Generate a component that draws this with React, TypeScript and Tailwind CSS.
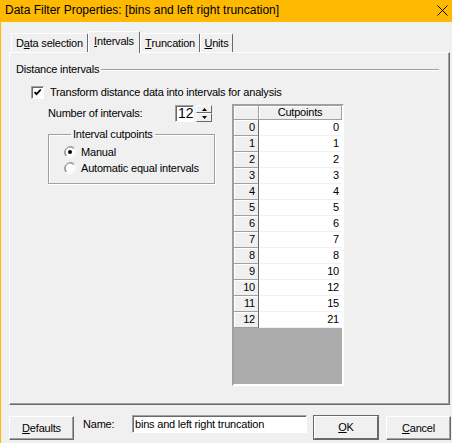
const rows: [number, number][] = [
  [0, 0], [1, 1], [2, 2], [3, 3], [4, 4], [5, 5], [6, 6],
  [7, 7], [8, 8], [9, 10], [10, 12], [11, 15], [12, 21],
]

function Radio({ checked }: { checked?: boolean }) {
  return (
    <svg width="12" height="12" viewBox="0 0 12 12" className="shrink-0">
      <path d="M10.2 1.8A6 6 0 0 0 1.8 10.2" fill="none" stroke="#a0a0a0" strokeWidth="1" />
      <path d="M9.5 2.5A5 5 0 0 0 2.5 9.5" fill="none" stroke="#696969" strokeWidth="1" />
      <path d="M1.8 10.2A6 6 0 0 0 10.2 1.8" fill="none" stroke="#ffffff" strokeWidth="1" />
      <circle cx="6" cy="6" r="4.4" fill="#ffffff" />
      {checked && <circle cx="6" cy="6" r="2" fill="#000000" />}
    </svg>
  )
}

export default function App() {
  return (
    <div className="w-[452px] h-[443px] overflow-hidden bg-[#f0f0f0] text-[11px] leading-[13px] tracking-[-0.2px] text-black font-['Liberation_Sans',Arial,sans-serif]">
      {/* Title bar */}
      <div className="h-[22px] bg-[#ffb900] flex items-center justify-between pl-[5px] pr-[4px] pb-[2px]">
        <span className="text-[12px] leading-[14px] tracking-normal">Data Filter Properties: [bins and left right truncation]</span>
        <svg width="11" height="11" viewBox="0 0 11 11" className="mt-[1px]">
          <path d="M0.5 0.5L10.5 10.5M10.5 0.5L0.5 10.5" stroke="#000" strokeWidth="1" />
        </svg>
      </div>

      <div className="h-[421px] border-l border-l-[#ffb900] pl-[8px] pt-[9px]">
        {/* Tabs */}
        <div className="flex items-end h-[21px]">
          <div className="ml-[2px] w-[77px] h-[19px] flex items-center justify-center border-t border-l border-t-white border-l-white border-r border-r-[#696969] rounded-tl-[2px] rounded-tr-[2px]">
            D<span className="underline">a</span>ta selection
          </div>
          <div className="relative z-10 -mb-[1px] w-[52px] h-[22px] pb-[3px] flex items-center justify-center bg-[#f0f0f0] border-t border-l border-t-white border-l-white border-r border-r-[#696969] rounded-tl-[2px] rounded-tr-[2px]">
            <span className="underline">I</span>ntervals
          </div>
          <div className="w-[60px] h-[19px] flex items-center justify-center border-t border-l border-t-white border-l-white border-r border-r-[#696969] rounded-tl-[2px] rounded-tr-[2px]">
            <span className="underline">T</span>runcation
          </div>
          <div className="w-[33px] h-[19px] flex items-center justify-center border-t border-l border-t-white border-l-white border-r border-r-[#696969] rounded-tl-[2px] rounded-tr-[2px]">
            <span className="underline">U</span>nits
          </div>
        </div>

        {/* Tab panel */}
        <div className="w-[441px] h-[353px] border border-t-white border-l-white border-r-[#696969] border-b-[#696969] shadow-[inset_-1px_-1px_0_#a0a0a0]">
          <div className="flex items-center mt-[10px] ml-[6px] mr-[10px] h-[13px]">
            <span>Distance intervals</span>
            <div className="flex-1 ml-[2px] border-t border-t-[#a0a0a0] border-b border-b-white" />
          </div>

          <div className="flex items-center mt-[10px] ml-[21px] h-[13px]">
            <div className="w-[13px] h-[13px] bg-white border border-t-[#a0a0a0] border-l-[#a0a0a0] border-r-white border-b-white shadow-[inset_1px_1px_0_#696969] flex items-center justify-center">
              <svg width="9" height="9" viewBox="0 0 9 9">
                <path d="M1.5 4L3.5 6.2L7.8 1.5" fill="none" stroke="#000" strokeWidth="1.8" />
              </svg>
            </div>
            <span className="ml-[6px]">Transform distance data into intervals for analysis</span>
          </div>

          <div className="flex mt-[5px]">
            <div className="ml-[38px] w-[167px]">
              <div className="flex items-center h-[17px] mt-[1px]">
                <span className="w-[127px]">Number of intervals:</span>
                <div className="w-[19px] h-[17px] bg-white border border-t-[#a0a0a0] border-l-[#a0a0a0] border-r-white border-b-white shadow-[inset_1px_1px_0_#696969] text-[14px] leading-[15px] pl-[2px] tracking-normal">
                  12
                </div>
                <div className="ml-[2px] w-[16px] h-[17px] flex flex-col">
                  <div className="h-[8px] flex items-center justify-center border border-t-white border-l-white border-r-[#696969] border-b-[#696969]">
                    <svg width="5" height="3" viewBox="0 0 5 3"><path d="M2.5 0L5 3H0Z" fill="#000" /></svg>
                  </div>
                  <div className="h-[9px] flex items-center justify-center border border-t-white border-l-white border-r-[#696969] border-b-[#696969]">
                    <svg width="5" height="3" viewBox="0 0 5 3"><path d="M0 0H5L2.5 3Z" fill="#000" /></svg>
                  </div>
                </div>
              </div>

              <fieldset className="mt-[6px] w-[167px] h-[56px] border border-[#a0a0a0] shadow-[1px_1px_0_#ffffff,inset_1px_1px_0_#ffffff] pl-[15px] pt-[3px]">
                <legend className="ml-[7px] px-[2px] leading-[13px]">Interval cutpoints</legend>
                <div className="flex items-center h-[16px]">
                  <Radio checked />
                  <span className="ml-[5px]">Manual</span>
                </div>
                <div className="flex items-center h-[16px]">
                  <Radio />
                  <span className="ml-[5px]">Automatic equal intervals</span>
                </div>
              </fieldset>
            </div>

            {/* Grid */}
            <div className="ml-[17px] w-[112px] h-[282px] flex flex-col border-2 border-t-[#a0a0a0] border-l-[#a0a0a0] border-r-white border-b-white shadow-[inset_1px_1px_0_#696969]">
              <div className="flex h-[14px] shrink-0">
                <div className="w-[25px] bg-[#f0f0f0] border-r border-b border-[#a0a0a0] shadow-[inset_1px_1px_0_#ffffff]" />
                <div className="w-[83px] bg-[#f0f0f0] border-r border-b border-[#a0a0a0] shadow-[inset_1px_1px_0_#ffffff] flex items-center justify-center">
                  Cutpoints
                </div>
              </div>
              {rows.map(([i, v]) => (
                <div key={i} className="flex h-[16px] shrink-0">
                  <div className="w-[25px] bg-[#f0f0f0] border-r border-b border-r-[#696969] border-b-[#a0a0a0] shadow-[inset_1px_1px_0_#ffffff] flex items-center justify-end pr-[3px]">
                    {i}
                  </div>
                  <div className="w-[83px] bg-white border-b border-b-[#f0f0f0] flex items-center justify-end pr-[3px]">
                    {v}
                  </div>
                </div>
              ))}
              <div className="flex-1 bg-[#ababab]" />
            </div>
          </div>
        </div>

        {/* Bottom row */}
        <div className="flex items-start mt-[10px]">
          <button className="mt-[1px] w-[65px] h-[24px] bg-[#f0f0f0] border border-t-white border-l-white border-r-[#696969] border-b-[#696969] shadow-[inset_-1px_-1px_0_#a0a0a0] flex items-center justify-center">
            <span className="underline">D</span>efaults
          </button>
          <span className="ml-[9px] mt-[3px] w-[49px]">Name:</span>
          <div className="w-[175px] h-[18px] bg-white border border-t-[#a0a0a0] border-l-[#a0a0a0] border-r-white border-b-white shadow-[inset_1px_1px_0_#696969] pl-[2px] flex items-center">
            bins and left right truncation
          </div>
          <button className="ml-[6px] w-[66px] h-[25px] bg-[#f0f0f0] border border-[#696969] flex items-center justify-center">
            <span className="w-full h-full flex items-center justify-center border border-t-white border-l-white border-r-[#696969] border-b-[#696969]">
              <span className="underline">O</span>K
            </span>
          </button>
          <button className="ml-[7px] mt-[1px] w-[65px] h-[24px] bg-[#f0f0f0] border border-t-white border-l-white border-r-[#696969] border-b-[#696969] shadow-[inset_-1px_-1px_0_#a0a0a0] flex items-center justify-center">
            <span className="underline">C</span>ancel
          </button>
        </div>
      </div>
    </div>
  )
}
